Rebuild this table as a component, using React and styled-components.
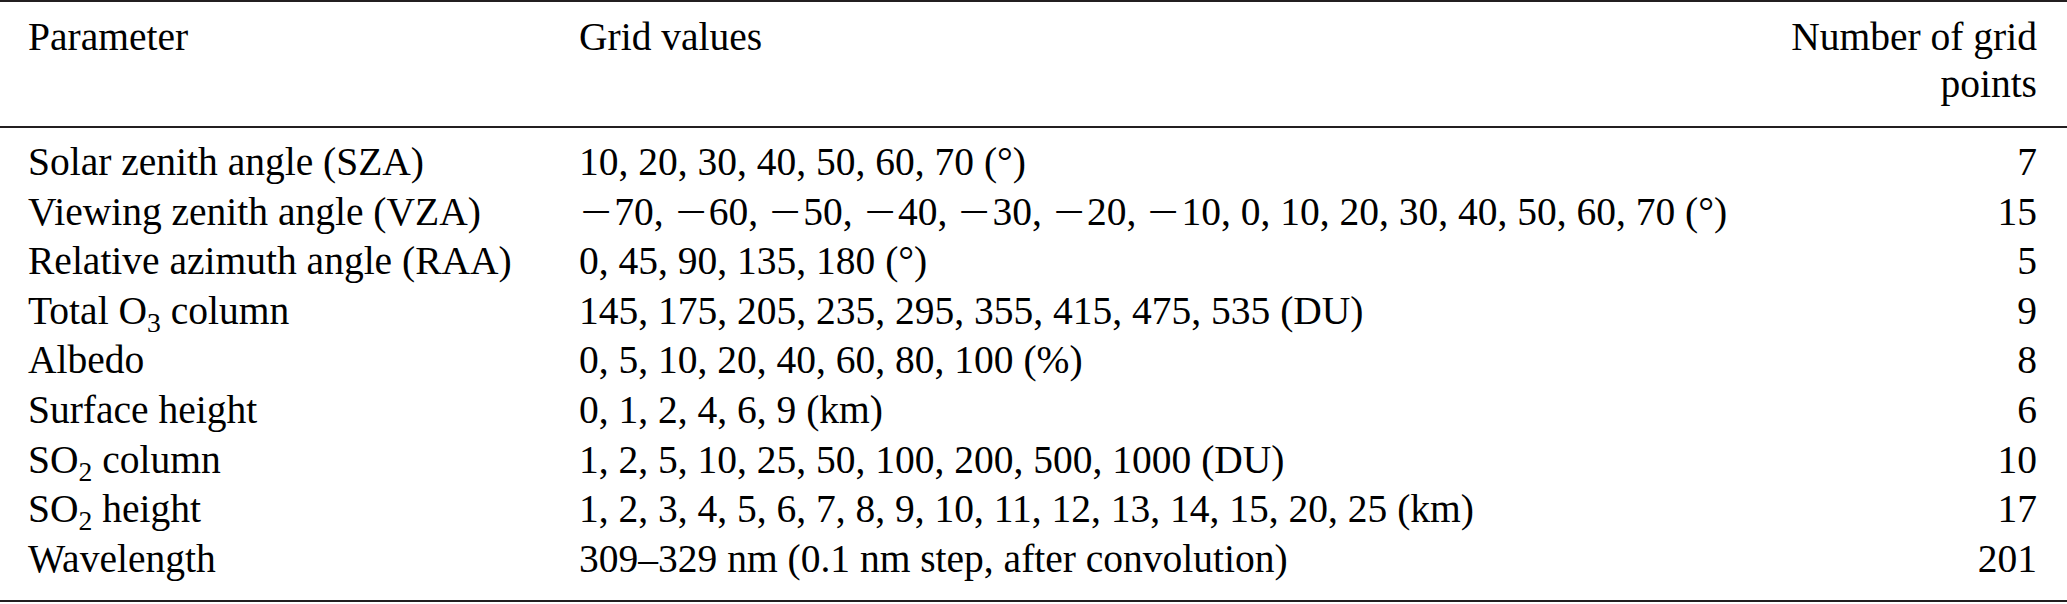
import React from "react";
import styled, { createGlobalStyle } from "styled-components";

const GlobalStyle = createGlobalStyle`
  body {
    margin: 0;
    background: #fff;
  }
`;

// grid table rows
const rows = [
  { name: "Solar zenith angle (SZA)", values: "10, 20, 30, 40, 50, 60, 70 (°)", count: 7 },
  {
    name: "Viewing zenith angle (VZA)",
    values: "−70, −60, −50, −40, −30, −20, −10, 0, 10, 20, 30, 40, 50, 60, 70 (°)",
    count: 15,
  },
  { name: "Relative azimuth angle (RAA)", values: "0, 45, 90, 135, 180 (°)", count: 5 },
  {
    name: ["Total O", "3", " column"],
    values: "145, 175, 205, 235, 295, 355, 415, 475, 535 (DU)",
    count: 9,
  },
  { name: "Albedo", values: "0, 5, 10, 20, 40, 60, 80, 100 (%)", count: 8 },
  { name: "Surface height", values: "0, 1, 2, 4, 6, 9 (km)", count: 6 },
  {
    name: ["SO", "2", " column"],
    values: "1, 2, 5, 10, 25, 50, 100, 200, 500, 1000 (DU)",
    count: 10,
  },
  {
    name: ["SO", "2", " height"],
    values: "1, 2, 3, 4, 5, 6, 7, 8, 9, 10, 11, 12, 13, 14, 15, 20, 25 (km)",
    count: 17,
  },
  { name: "Wavelength", values: "309–329 nm (0.1 nm step, after convolution)", count: 201 },
];

const Table = styled.table`
  width: 2067px;
  table-layout: fixed;
  border-collapse: collapse;
  font-family: "Liberation Serif", "Times New Roman", serif;
  font-size: 39.5px;
  color: #000;
  border-top: 2px solid #231f20;
  border-bottom: 2px solid #231f20;
`;

const Head = styled.thead`
  border-bottom: 2px solid #231f20;
`;

const Th = styled.th`
  font-weight: normal;
  line-height: 47px;
  vertical-align: top;
  padding: 12px 0 18px 0;
  text-align: ${(p) => (p.$right ? "right" : "left")};
  padding-left: ${(p) => (p.$first ? "28px" : "0")};
  padding-right: ${(p) => (p.$right ? "30px" : "0")};
`;

const Row = styled.tr`
  &:first-child td {
    padding-top: 10px;
  }
  &:last-child td {
    padding-bottom: 16px;
  }
`;

const Td = styled.td`
  line-height: 49.6px;
  padding: 0;
  white-space: nowrap;
  text-align: ${(p) => (p.$right ? "right" : "left")};
  padding-left: ${(p) => (p.$first ? "28px" : "0")};
  padding-right: ${(p) => (p.$right ? "30px" : "0")};
`;

const Sub = styled.span`
  font-size: 0.7em;
  vertical-align: -0.3em;
  line-height: 0;
`;

// math minus is wider than the text one
const Minus = styled.span`
  display: inline-block;
  transform: scaleX(1.4);
  margin: 0 7px 0 6px;
`;

const Name = ({ name }) =>
  Array.isArray(name) ? (
    <>
      {name[0]}
      <Sub>{name[1]}</Sub>
      {name[2]}
    </>
  ) : (
    name
  );

const Values = ({ text }) =>
  text.split("−").map((part, i) => (
    <React.Fragment key={i}>
      {i > 0 && <Minus>−</Minus>}
      {part}
    </React.Fragment>
  ));

const App = () => {
  return (
    <>
      <GlobalStyle />
      <Table>
        <colgroup>
          <col style={{ width: "579px" }} />
          <col />
          <col style={{ width: "340px" }} />
        </colgroup>
        <Head>
          <tr>
            <Th $first>Parameter</Th>
            <Th>Grid values</Th>
            <Th $right>
              Number of grid
              <br />
              points
            </Th>
          </tr>
        </Head>
        <tbody>
          {rows.map((r, i) => (
            <Row key={i}>
              <Td $first>
                <Name name={r.name} />
              </Td>
              <Td>
                <Values text={r.values} />
              </Td>
              <Td $right>{r.count}</Td>
            </Row>
          ))}
        </tbody>
      </Table>
    </>
  );
};

export default App;
